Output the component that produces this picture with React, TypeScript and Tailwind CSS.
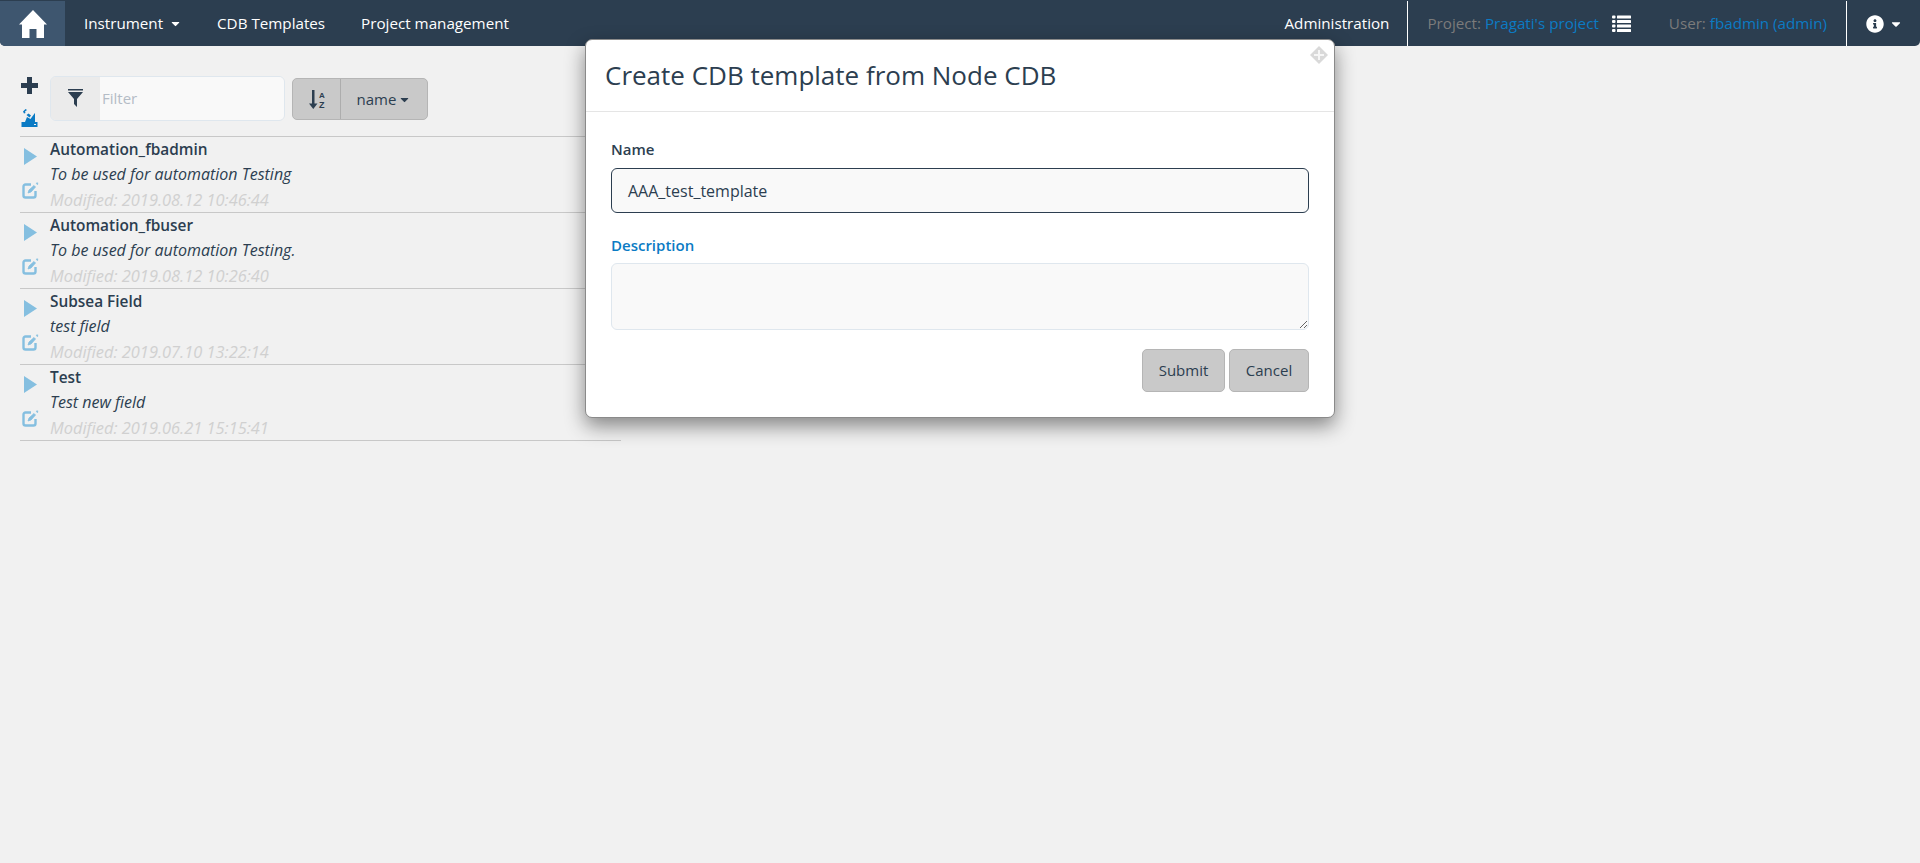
import React from 'react';
import { FaCaretDown, FaInfoCircle } from 'react-icons/fa';

const rows = [
  { name: 'Automation_fbadmin', desc: 'To be used for automation Testing', modified: 'Modified: 2019.08.12 10:46:44' },
  { name: 'Automation_fbuser', desc: 'To be used for automation Testing.', modified: 'Modified: 2019.08.12 10:26:40' },
  { name: 'Subsea Field', desc: 'test field', modified: 'Modified: 2019.07.10 13:22:14' },
  { name: 'Test', desc: 'Test new field', modified: 'Modified: 2019.06.21 15:15:41' },
];

const HomeIcon = () => (
  <svg width="28" height="28" viewBox="0 0 28 28" fill="currentColor">
    <path d="M14 0 L28 14.5 L25 14.5 L25 28 L17.5 28 L17.5 19 L10.5 19 L10.5 28 L3 28 L3 14.5 L0 14.5 Z" />
  </svg>
);

const ListIcon = () => (
  <svg width="19" height="17" viewBox="0 0 19 17" fill="currentColor">
    <rect x="0" y="0.5" width="3.5" height="3" rx="1" />
    <rect x="5" y="0.5" width="14" height="3" rx="0.5" />
    <rect x="0" y="5" width="3.5" height="3" rx="1" />
    <rect x="5" y="5" width="14" height="3" rx="0.5" />
    <rect x="0" y="9.5" width="3.5" height="3" rx="1" />
    <rect x="5" y="9.5" width="14" height="3" rx="0.5" />
    <rect x="0" y="14" width="3.5" height="3" rx="1" />
    <rect x="5" y="14" width="14" height="3" rx="0.5" />
  </svg>
);

const PlusIcon = () => (
  <svg width="17" height="17" viewBox="0 0 17 17" className="text-[#2c3e50]" fill="currentColor">
    <path d="M6 0 H11 V6 H17 V11 H11 V17 H6 V11 H0 V6 H6 Z" />
  </svg>
);

const SatelliteIcon = () => (
  <svg width="17" height="18" viewBox="0 0 17 18" className="text-[#0b7bc4]" fill="currentColor">
    <path fillRule="evenodd" d="M0.5 13 H16.5 V18 H0.5 Z M13 15 H15 V16 H13 Z" />
    <path d="M4 13 L6 8 L9.5 10 L13.5 4.5 L14 4 L14 13 Z" />
    <path d="M2 2.5 L4.5 0 L6 1 L4 2.5 L4.5 4 L3 4.5 Z" />
    <path d="M5.5 6 L7.5 4.5 L10 6.5 L8.5 8.5 Z" />
  </svg>
);

const FilterIcon = () => (
  <svg width="15" height="18" viewBox="0 0 15 18" className="text-[#2c3e50]" fill="currentColor">
    <rect x="0" y="0" width="15" height="1.5" />
    <path d="M0 3 H15 L9 10 V18 L6 15 V10 Z" />
  </svg>
);

const SortIcon = () => (
  <svg width="16" height="19" viewBox="0 0 16 19" fill="currentColor">
    <path d="M3 0 H5.5 V13.5 H8.5 L4.25 19 L0 13.5 H3 Z" />
    <text x="10" y="8" fontSize="8" fontWeight="700" fontFamily="'Liberation Sans', sans-serif">A</text>
    <text x="10" y="18" fontSize="9" fontWeight="700" fontFamily="'Liberation Sans', sans-serif">Z</text>
  </svg>
);

const PlayIcon = () => (
  <svg width="13" height="17" viewBox="0 0 13 17" fill="currentColor">
    <path d="M0 0 L13 8.5 L0 17 Z" />
  </svg>
);

const EditIcon = () => (
  <svg width="17" height="17" viewBox="0 0 17 17" fill="none" stroke="currentColor">
    <path d="M9 2.5 H3.5 A2 2 0 0 0 1.5 4.5 V13.5 A2 2 0 0 0 3.5 15.5 H11.5 A2 2 0 0 0 13.5 13.5 V9" strokeWidth="2.4" />
    <path d="M6 11 L7 8 L12 3.5 L13.5 5 L9 10 Z" fill="currentColor" strokeWidth="0.8" />
    <path d="M14 1 L16 0.8 L15.5 3 Z" fill="currentColor" strokeWidth="0.4" />
  </svg>
);

const MoveIcon = () => (
  <svg width="18" height="18" viewBox="0 0 18 18" className="text-[#d9d9d9]">
    <path d="M9 0 L13 4 L14 5 L18 9 L14 13 L13 14 L9 18 L5 14 L4 13 L0 9 L4 5 L5 4 Z" fill="currentColor" />
    <path d="M8 4 H10 V8 H14 V10 H10 V14 H8 V10 H4 V8 H8 Z" fill="#ffffff" opacity="0.75" />
  </svg>
);

const Navbar = () => (
  <nav className="h-[46px] bg-[#2c3e50] rounded-b-[5px] flex items-stretch text-white text-[15.2px] pt-px">
    <div className="w-[65px] bg-[#3e566f] flex items-center justify-center rounded-bl-[5px]">
      <HomeIcon />
    </div>
    <div className="flex items-center gap-1.5 ml-[19px]">
      Instrument <FaCaretDown className="text-[13px]" />
    </div>
    <div className="flex items-center ml-[35px]">CDB Templates</div>
    <div className="flex items-center ml-[36px]">Project management</div>
    <div className="flex-1" />
    <div className="flex items-center pr-[18px]">Administration</div>
    <div className="flex items-center gap-[13px] border-l border-white pl-[19px] pr-[38px]">
      <span className="text-[#7b7b7b]">
        Project: <span className="text-[#0b7bc4]">Pragati's project</span>
      </span>
      <ListIcon />
    </div>
    <div className="flex items-center pr-[19px] border-r border-white">
      <span className="text-[#7b7b7b]">
        User: <span className="text-[#0b7bc4]">fbadmin (admin)</span>
      </span>
    </div>
    <div className="w-[73px] flex items-center gap-[5px] pl-[19px]">
      <FaInfoCircle className="text-[18px]" />
      <FaCaretDown className="text-[14px]" />
    </div>
  </nav>
);

const Toolbar = () => (
  <div className="flex items-center h-[60px] mt-[22px]">
    <div className="w-[30px] flex flex-col items-start gap-[15px] pl-px mt-[8px]">
      <PlusIcon />
      <SatelliteIcon />
    </div>
    <div className="w-[235px] h-[45px] flex rounded-[6px] border border-[#dfe7ee] overflow-hidden">
      <div className="w-[49px] bg-[#ebebeb] flex items-center justify-center">
        <FilterIcon />
      </div>
      <div className="flex-1 bg-[#f9f9f9] flex items-center text-[15px] text-[#b4bcc6] pl-0.5">Filter</div>
    </div>
    <div className="ml-[7px] mt-[2px] w-[136px] h-[42px] flex bg-[#c9c9c9] border border-[#b5b5b5] rounded-[5px] text-[#2c3e50] text-[15px]">
      <div className="w-[48px] border-r border-[#adadad] flex items-center justify-center">
        <SortIcon />
      </div>
      <div className="flex-1 flex items-center justify-center gap-0.5">
        name <FaCaretDown className="text-[13px]" />
      </div>
    </div>
  </div>
);

const TemplateList = () => (
  <div className="w-[601px] mt-[8px] border-b border-[#c8c8c8]">
    {rows.map((row) => (
      <div key={row.name} className="h-[76px] border-t border-[#c8c8c8] flex">
        <div className="w-[30px] flex flex-col pt-[11px] text-[#85bfe0]">
          <div className="pl-[4px] mb-[17px]">
            <PlayIcon />
          </div>
          <div className="pl-[2px]">
            <EditIcon />
          </div>
        </div>
        <div className="leading-[25px]">
          <div className="text-[15.4px] font-semibold text-[#2c3e50]">{row.name}</div>
          <div className="text-[16px] italic text-[#2c3e50]">{row.desc}</div>
          <div className="text-[16.4px] italic text-[#d0d0d0]">{row.modified}</div>
        </div>
      </div>
    ))}
  </div>
);

const Modal = () => (
  <div className="absolute left-[585px] top-[39px] w-[750px] h-[379px] bg-white border border-[#8a8a8a] rounded-[7px] shadow-[0_8px_20px_rgba(0,0,0,0.45)] text-[#2c3e50]">
    <div className="absolute right-[6px] top-[6px]">
      <MoveIcon />
    </div>
    <div className="h-[72px] border-b border-[#e5e5e5] flex items-center pl-[19px] text-[26px]">
      Create CDB template from Node CDB
    </div>
    <div className="px-[25px]">
      <label className="block mt-[25px] text-[15px] font-semibold leading-[24px]">Name</label>
      <div className="mt-[7px] h-[45px] bg-[#f9f9f9] border border-[#2c3e50] rounded-[6px] flex items-center pl-[16px] text-[16px]">
        AAA_test_template
      </div>
      <label className="block mt-[20px] text-[15px] font-semibold leading-[24px] text-[#0b7bc4]">Description</label>
      <textarea
        readOnly
        className="block mt-[6px] w-full h-[67px] bg-[#f9f9f9] border border-[#dfe7ee] rounded-[6px] outline-none"
      />
      <div className="flex justify-end gap-1 mt-[19px]">
        <button className="w-[83px] h-[43px] bg-[#c9c9c9] border border-[#b5b5b5] rounded-[5px] text-[15px]">Submit</button>
        <button className="w-[80px] h-[43px] bg-[#c9c9c9] border border-[#b5b5b5] rounded-[5px] text-[15px]">Cancel</button>
      </div>
    </div>
  </div>
);

export default function App() {
  return (
    <div className="relative min-h-[863px] bg-[#f1f1f1] font-['Open_Sans',sans-serif]">
      <Navbar />
      <div className="pl-[20px]">
        <Toolbar />
        <TemplateList />
      </div>
      <Modal />
    </div>
  );
}
